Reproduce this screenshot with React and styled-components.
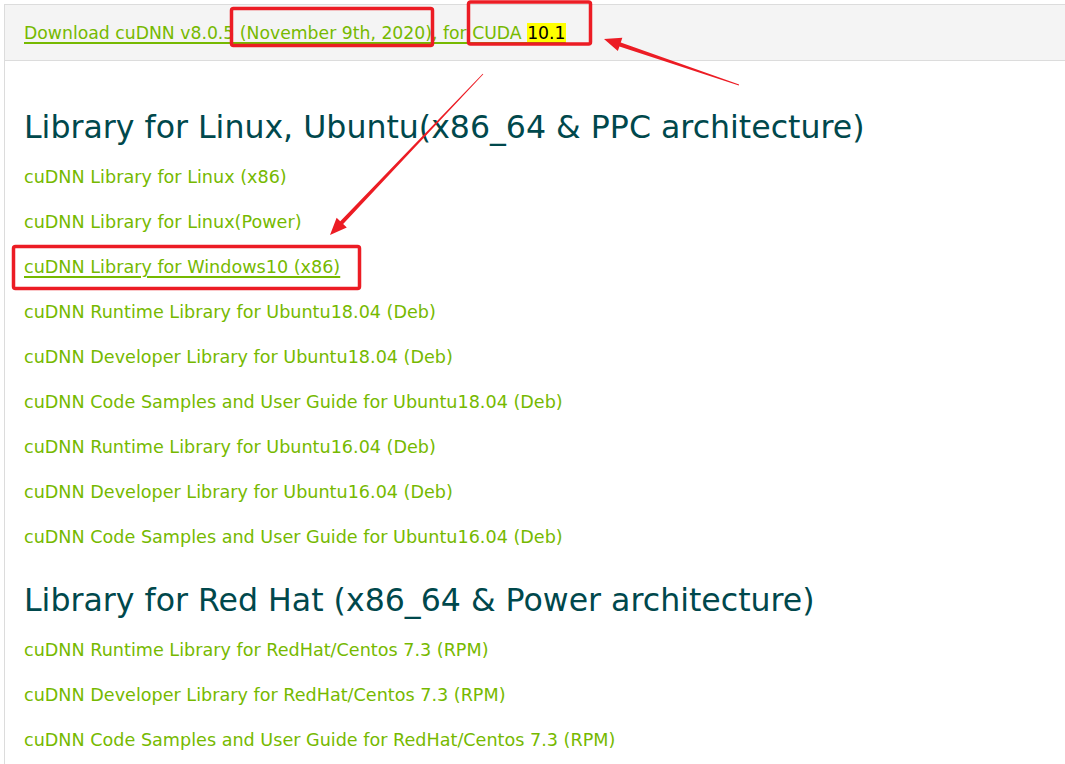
import styled, { createGlobalStyle } from 'styled-components'

const GlobalStyle = createGlobalStyle`
  html, body {
    margin: 0;
    padding: 0;
    background: #fff;
  }
  body {
    font-family: "DejaVu Sans", "Noto Sans", sans-serif;
  }
`

const Frame = styled.div`
  position: relative;
  width: 1065px;
  height: 764px;
  overflow: hidden;
`

const Page = styled.div`
  height: 760px;
  margin: 4px 0 0 4px;
  border-left: 1px solid #dcdcdc;
`

const VersionBar = styled.div`
  display: flex;
  align-items: center;
  height: 55px;
  padding-left: 19px;
  background: #f4f4f4;
  border-top: 1px solid #dcdcdc;
  border-bottom: 1px solid #dcdcdc;
`

const Link = styled.a`
  color: #76b900;
  font-size: ${p => p.$size || 17.6}px;
  text-decoration: ${p => (p.$active ? 'underline' : 'none')};
  text-decoration-thickness: 1.5px;
  text-underline-offset: 3px;
  cursor: pointer;
`

const Highlight = styled.span`
  background: #ffff00;
  color: #000;
`

const Content = styled.div`
  padding-left: 19px;
`

const Heading = styled.h2`
  margin: 0 0 8px;
  color: #00484c;
  font-size: 31.6px;
  font-weight: normal;
  line-height: 40px;
  padding-top: ${p => p.$top}px;
`

const LinkList = styled.ul`
  list-style: none;
  margin: 0;
  padding: 0;
`

const LinkRow = styled.li`
  height: 45px;
  line-height: 45px;
`

const Overlay = styled.svg`
  position: absolute;
  left: 0;
  top: 0;
  width: 1065px;
  height: 764px;
  pointer-events: none;
`

const sections = [
  {
    title: 'Library for Linux, Ubuntu(x86_64 & PPC architecture)',
    top: 46,
    links: [
      'cuDNN Library for Linux (x86)',
      'cuDNN Library for Linux(Power)',
      'cuDNN Library for Windows10 (x86)',
      'cuDNN Runtime Library for Ubuntu18.04 (Deb)',
      'cuDNN Developer Library for Ubuntu18.04 (Deb)',
      'cuDNN Code Samples and User Guide for Ubuntu18.04 (Deb)',
      'cuDNN Runtime Library for Ubuntu16.04 (Deb)',
      'cuDNN Developer Library for Ubuntu16.04 (Deb)',
      'cuDNN Code Samples and User Guide for Ubuntu16.04 (Deb)',
    ],
  },
  {
    title: 'Library for Red Hat (x86_64 & Power architecture)',
    top: 20,
    links: [
      'cuDNN Runtime Library for RedHat/Centos 7.3 (RPM)',
      'cuDNN Developer Library for RedHat/Centos 7.3 (RPM)',
      'cuDNN Code Samples and User Guide for RedHat/Centos 7.3 (RPM)',
    ],
  },
]

// tapered arrow: thin tail, wider shaft near the head, triangular tip
function arrowPoints(tx, ty, hx, hy) {
  const dx = hx - tx
  const dy = hy - ty
  const len = Math.hypot(dx, dy)
  const ux = dx / len
  const uy = dy / len
  const nx = -uy
  const ny = ux
  const headLen = 17
  const headW = 7
  const shaft = 2
  const bx = hx - ux * headLen
  const by = hy - uy * headLen
  const pts = [
    [tx + nx * 0.4, ty + ny * 0.4],
    [bx + nx * shaft, by + ny * shaft],
    [bx + nx * headW, by + ny * headW],
    [hx, hy],
    [bx - nx * headW, by - ny * headW],
    [bx - nx * shaft, by - ny * shaft],
    [tx - nx * 0.4, ty - ny * 0.4],
  ]
  return pts.map(p => p.join(',')).join(' ')
}

function Annotations() {
  return (
    <Overlay viewBox="0 0 1065 764">
      <g fill="none" stroke="#ec1c24" strokeWidth="3.5">
        <rect x="231.5" y="8.5" width="201" height="37" rx="2" />
        <rect x="468.5" y="2" width="122" height="42" rx="2" />
        <rect x="13.5" y="246.5" width="346" height="42" rx="2" />
      </g>
      <g fill="#ec1c24">
        <polygon points={arrowPoints(739, 85, 604, 39)} />
        <polygon points={arrowPoints(483, 74, 330, 235)} />
      </g>
    </Overlay>
  )
}

export default function App() {
  return (
    <Frame>
      <GlobalStyle />
      <Page>
        <VersionBar>
          <Link $active $size={17.25}>
            Download cuDNN v8.0.5 (November 9th, 2020), for CUDA <Highlight>10.1</Highlight>
          </Link>
        </VersionBar>
        <Content>
          {sections.map(section => (
            <section key={section.title}>
              <Heading $top={section.top}>{section.title}</Heading>
              <LinkList>
                {section.links.map(text => (
                  <LinkRow key={text}>
                    <Link $active={text.includes('Windows10')}>{text}</Link>
                  </LinkRow>
                ))}
              </LinkList>
            </section>
          ))}
        </Content>
      </Page>
      <Annotations />
    </Frame>
  )
}
